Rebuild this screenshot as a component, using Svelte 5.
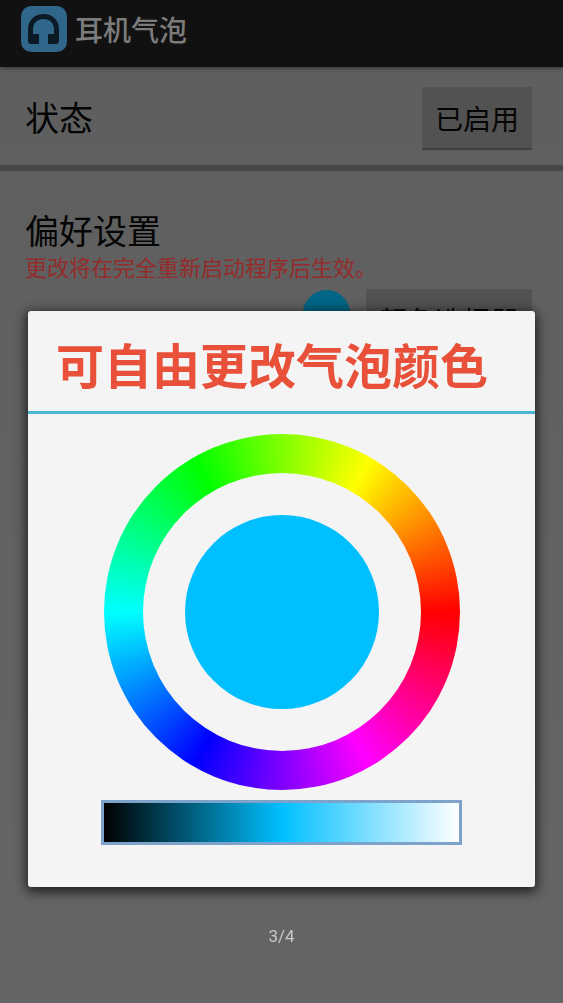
<!--
  Headphone bubble settings screen with the colour picker dialog open.
-->
<script lang="ts">
  let enabled = $state(true);
  let lightness = $state(50);

  const page = 3;
  const pageCount = 4;
</script>

<div class="screen">
  <header class="app-bar">
    <svg class="logo" viewBox="0 0 46 46" aria-hidden="true">
      <rect width="46" height="46" rx="10" fill="#2f668a" />
      <path
        d="M7 35V23.500C7 14 13.500 8 22.500 8S38 14 38 23.500V35q0 3-3 3h-8V28h6v-4.500C33 17 28.500 13 22.500 13S12 17 12 23.500V28h6v10h-8q-3 0-3-3z"
        fill="#0b1a25"
      />
    </svg>
    <h1>耳机气泡</h1>
  </header>

  <main>
    <section class="status">
      <h2>状态</h2>
      <button class="btn" onclick={() => (enabled = !enabled)}>
        {enabled ? '已启用' : '已禁用'}
      </button>
    </section>

    <section class="prefs">
      <h2>偏好设置</h2>
      <p class="warning">更改将在完全重新启动程序后生效。</p>
      <div class="color-row">
        <span class="swatch"></span>
        <button class="btn">颜色选择器</button>
      </div>
    </section>
  </main>
</div>

<div class="overlay">
  <div class="dialog" role="dialog" aria-modal="true" aria-labelledby="dialog-title">
    <h2 id="dialog-title">可自由更改气泡颜色</h2>
    <div class="picker">
      <!-- Hue wheel with the current colour in the middle -->
      <div class="wheel">
        <div class="hole">
          <div class="current"></div>
        </div>
      </div>
      <input type="range" min="0" max="100" bind:value={lightness} aria-label="亮度" />
    </div>
  </div>
  <footer class="counter">{page}/{pageCount}</footer>
</div>

<style>
  :global(body) {
    margin: 0;
    background: #626262;
  }

  .screen,
  .overlay {
    font-family: Roboto, 'Noto Sans CJK SC', sans-serif;
  }

  .screen {
    min-height: 100vh;
    background: linear-gradient(#5e5e5e, #656565);
    color: #050505;
  }

  h1,
  h2,
  p {
    margin: 0;
    font-weight: 400;
  }

  /* Top bar */
  .app-bar {
    display: flex;
    align-items: flex-start;
    gap: 8px;
    box-sizing: border-box;
    height: 67px;
    padding: 6px 21px 0;
    background: #111;
    box-shadow: 0 1px 4px rgba(0, 0, 0, 0.5);
  }

  .logo {
    width: 46px;
    height: 46px;
  }

  h1 {
    color: #7c7c7c;
    font-size: 28px;
    font-weight: 500;
    line-height: 52px;
  }

  /* Settings */
  h2 {
    font-size: 34px;
    line-height: 44px;
  }

  .status {
    display: flex;
    align-items: center;
    justify-content: space-between;
    padding: 20px 31px 15px 25px;
    border-bottom: 6px solid #474747;
  }

  .btn {
    height: 63px;
    padding: 0 13px;
    border: 0;
    border-bottom: 2px solid #404040;
    border-radius: 1px;
    background: #525252;
    color: #050505;
    font: inherit;
    font-size: 28px;
  }

  .prefs {
    padding: 39px 31px 0 25px;
  }

  .warning {
    color: #952b2b;
    font-size: 22px;
    line-height: 30px;
  }

  .color-row {
    display: flex;
    justify-content: flex-end;
    gap: 16px;
    padding-top: 5px;
  }

  .swatch {
    width: 47px;
    height: 47px;
    margin-top: 1px;
    border-radius: 50%;
    background: #006586;
  }

  /* Dialog layer over the settings */
  .overlay {
    position: fixed;
    inset: 0;
    display: flex;
    flex-direction: column;
    justify-content: flex-end;
  }

  .dialog {
    margin: 0 28px;
    border-radius: 3px;
    background: #f4f4f4;
    box-shadow: 0 3px 12px 2px rgba(0, 0, 0, 0.7);
  }

  .dialog h2 {
    padding: 27px 28px 13px;
    border-bottom: 3px solid #4bb7d2;
    color: #e8503a;
    font-size: 48px;
    font-weight: 700;
    line-height: 60px;
    white-space: nowrap;
  }

  .picker {
    display: flex;
    flex-direction: column;
    align-items: center;
    gap: 10px;
    padding: 20px 20px 42px;
  }

  .wheel,
  .hole {
    display: grid;
    place-items: center;
    border-radius: 50%;
  }

  .wheel {
    width: 356px;
    height: 356px;
    background: conic-gradient(
      from 90deg,
      #f00,
      #f0f,
      #00f,
      #0ff,
      #0f0,
      #ff0,
      #f00
    );
  }

  .hole {
    width: 278px;
    height: 278px;
    background: #f4f4f4;
  }

  .current {
    width: 194px;
    height: 194px;
    border-radius: 50%;
    background: #00bfff;
  }

  input[type='range'] {
    appearance: none;
    box-sizing: border-box;
    width: 361px;
    height: 45px;
    margin: 0;
    border: 3px solid #7da3ca;
    background: linear-gradient(to right, #000, #00bfff 50%, #fff);
  }

  input[type='range']::-webkit-slider-thumb {
    appearance: none;
    width: 4px;
    height: 39px;
    background: transparent;
  }

  .counter {
    box-sizing: border-box;
    height: 116px;
    padding-top: 39px;
    color: #c8c8c8;
    font-size: 17px;
    line-height: 20px;
    text-align: center;
  }
</style>
